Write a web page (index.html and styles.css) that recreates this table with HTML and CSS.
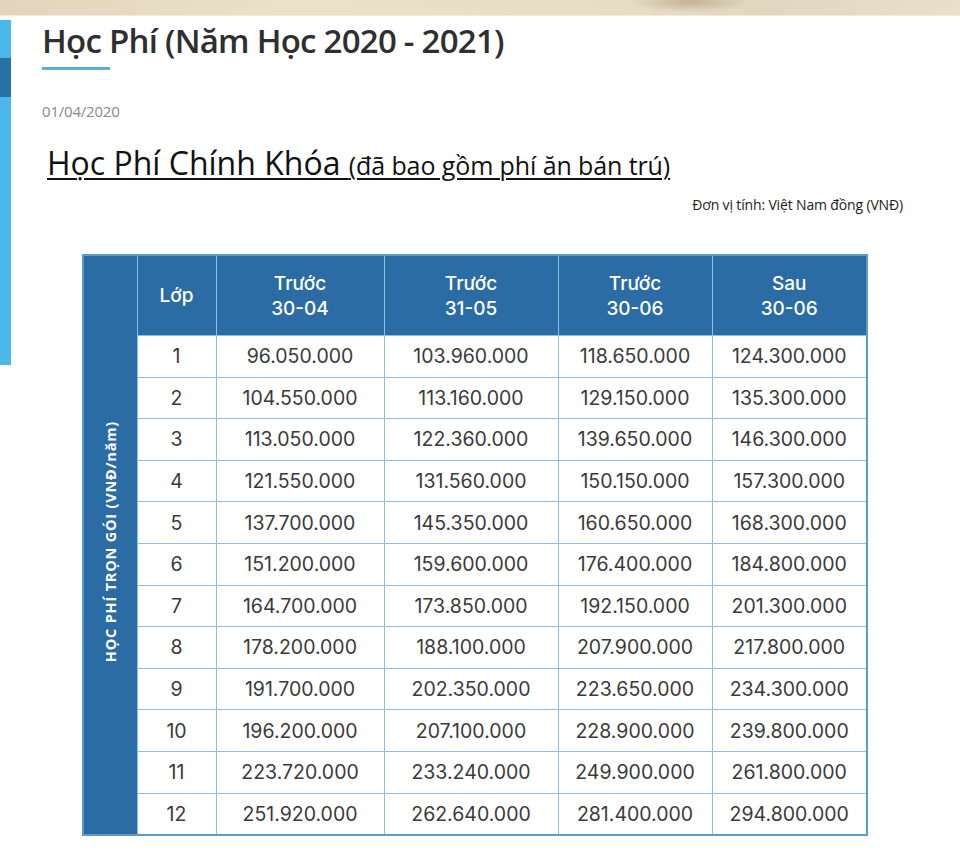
FILE: index.html
```html
<!DOCTYPE html>
<html lang="vi">
<head>
<meta charset="utf-8">
<title>Học Phí (Năm Học 2020 - 2021)</title>
<link rel="stylesheet" href="styles.css">
</head>
<body>
<div class="banner"></div>
<div class="page">
  <aside class="sidebar"><div class="bar"><span class="seg"></span></div></aside>
  <main class="content">
    <h1 class="title">Học Phí (Năm Học 2020 - 2021)</h1>
    <div class="accent"></div>
    <p class="date">01/04/2020</p>
    <h2 class="subtitle"><span class="big">Học Phí Chính Khóa </span><span class="small">(đã bao gồm phí ăn bán trú)</span></h2>
    <p class="unit">Đơn vị tính: Việt Nam đồng (VNĐ)</p>
    <table class="fees">
      <colgroup>
        <col class="c0"><col class="c1"><col class="c2"><col class="c3"><col class="c4"><col class="c5">
      </colgroup>
      <tbody>
        <tr class="head">
          <th class="side" rowspan="13"><span class="vtext">HỌC PHÍ TRỌN GÓI (VNĐ/năm)</span></th>
          <th>Lớp</th>
          <th>Trước<br>30-04</th>
          <th>Trước<br>31-05</th>
          <th>Trước<br>30-06</th>
          <th>Sau<br>30-06</th>
        </tr>
        <tr><td>1</td><td>96.050.000</td><td>103.960.000</td><td>118.650.000</td><td>124.300.000</td></tr>
        <tr><td>2</td><td>104.550.000</td><td>113.160.000</td><td>129.150.000</td><td>135.300.000</td></tr>
        <tr><td>3</td><td>113.050.000</td><td>122.360.000</td><td>139.650.000</td><td>146.300.000</td></tr>
        <tr><td>4</td><td>121.550.000</td><td>131.560.000</td><td>150.150.000</td><td>157.300.000</td></tr>
        <tr><td>5</td><td>137.700.000</td><td>145.350.000</td><td>160.650.000</td><td>168.300.000</td></tr>
        <tr><td>6</td><td>151.200.000</td><td>159.600.000</td><td>176.400.000</td><td>184.800.000</td></tr>
        <tr><td>7</td><td>164.700.000</td><td>173.850.000</td><td>192.150.000</td><td>201.300.000</td></tr>
        <tr><td>8</td><td>178.200.000</td><td>188.100.000</td><td>207.900.000</td><td>217.800.000</td></tr>
        <tr><td>9</td><td>191.700.000</td><td>202.350.000</td><td>223.650.000</td><td>234.300.000</td></tr>
        <tr><td>10</td><td>196.200.000</td><td>207.100.000</td><td>228.900.000</td><td>239.800.000</td></tr>
        <tr><td>11</td><td>223.720.000</td><td>233.240.000</td><td>249.900.000</td><td>261.800.000</td></tr>
        <tr><td>12</td><td>251.920.000</td><td>262.640.000</td><td>281.400.000</td><td>294.800.000</td></tr>
      </tbody>
    </table>
  </main>
</div>
</body>
</html>
```
FILE: styles.css
```css
html, body {
  margin: 0;
  padding: 0;
  background: #ffffff;
}
body {
  font-family: "Open Sans", "DejaVu Sans", sans-serif;
  color: #333;
}
.banner {
  height: 15px;
  background:
    radial-gradient(ellipse 60px 10px at 690px 2px, rgba(150,130,100,0.45), rgba(150,130,100,0) 100%),
    linear-gradient(90deg, #e3d5bc 0%, #ece0c8 30%, #e9ddc5 60%, #e2d6bf 80%, #e9dfcb 100%);
  border-bottom: 1px solid #f1ebe0;
}
.page {
  display: flex;
  align-items: flex-start;
}
.sidebar {
  width: 11px;
  flex: none;
  padding-top: 4px;
}
.bar {
  height: 345px;
  background: #4ab8e9;
  display: flex;
  flex-direction: column;
  padding-top: 38px;
  box-sizing: border-box;
}
.seg {
  display: block;
  height: 39px;
  background: #2871a4;
}
.content {
  padding-left: 31px;
  flex: 1;
}
.title {
  margin: 4px 0 0 0;
  font-size: 33px;
  font-weight: 600;
  letter-spacing: -0.75px;
  line-height: 42px;
  color: #2f2f2f;
}
.accent {
  width: 68px;
  height: 3px;
  margin-top: 5px;
  background: #5aafcf;
}
.date {
  margin: 31px 0 0 0;
  font-size: 15px;
  line-height: 20px;
  color: #8a8a8a;
  letter-spacing: -0.2px;
}
.subtitle {
  margin: 21px 0 0 5px;
  font-weight: 400;
  line-height: 42px;
  color: #111;
  text-decoration: underline;
  text-decoration-thickness: 2px;
  text-underline-offset: 3px;
}
.subtitle .big {
  font-size: 32px;
}
.subtitle .small {
  font-size: 25px;
  letter-spacing: -0.1px;
}
.unit {
  margin: 9px 57px 0 0;
  text-align: right;
  font-size: 14px;
  line-height: 18px;
  letter-spacing: -0.15px;
  color: #222;
}
.fees {
  margin: 40px 0 0 40px;
  border-collapse: collapse;
  table-layout: fixed;
  width: 784px;
  font-family: "Inter", "Liberation Sans", sans-serif;
  border: 2px solid #5b9ccb;
}
.c0 { width: 54px; }
.c1 { width: 79px; }
.c2 { width: 168px; }
.c3 { width: 174px; }
.c4 { width: 154px; }
.c5 { width: 155px; }
.fees th, .fees td {
  border: 1.5px solid #8fbee0;
  text-align: center;
  padding: 0;
}
.head th {
  background: #2a6ca3;
  color: #fff;
  font-weight: 500;
  font-size: 19px;
  line-height: 25px;
  height: 79px;
}
.fees th.side {
  background: #2a6ca3;
  vertical-align: middle;
  color: #fff;
}
.vtext {
  display: inline-block;
  writing-mode: vertical-rl;
  transform: rotate(180deg);
  font-family: "Open Sans", sans-serif;
  font-weight: 700;
  font-size: 14.5px;
  letter-spacing: 0.8px;
  white-space: nowrap;
}
.fees tbody td {
  height: 40.6px;
  font-size: 19.5px;
  color: #3a3a3a;
  background: #fff;
}
```
